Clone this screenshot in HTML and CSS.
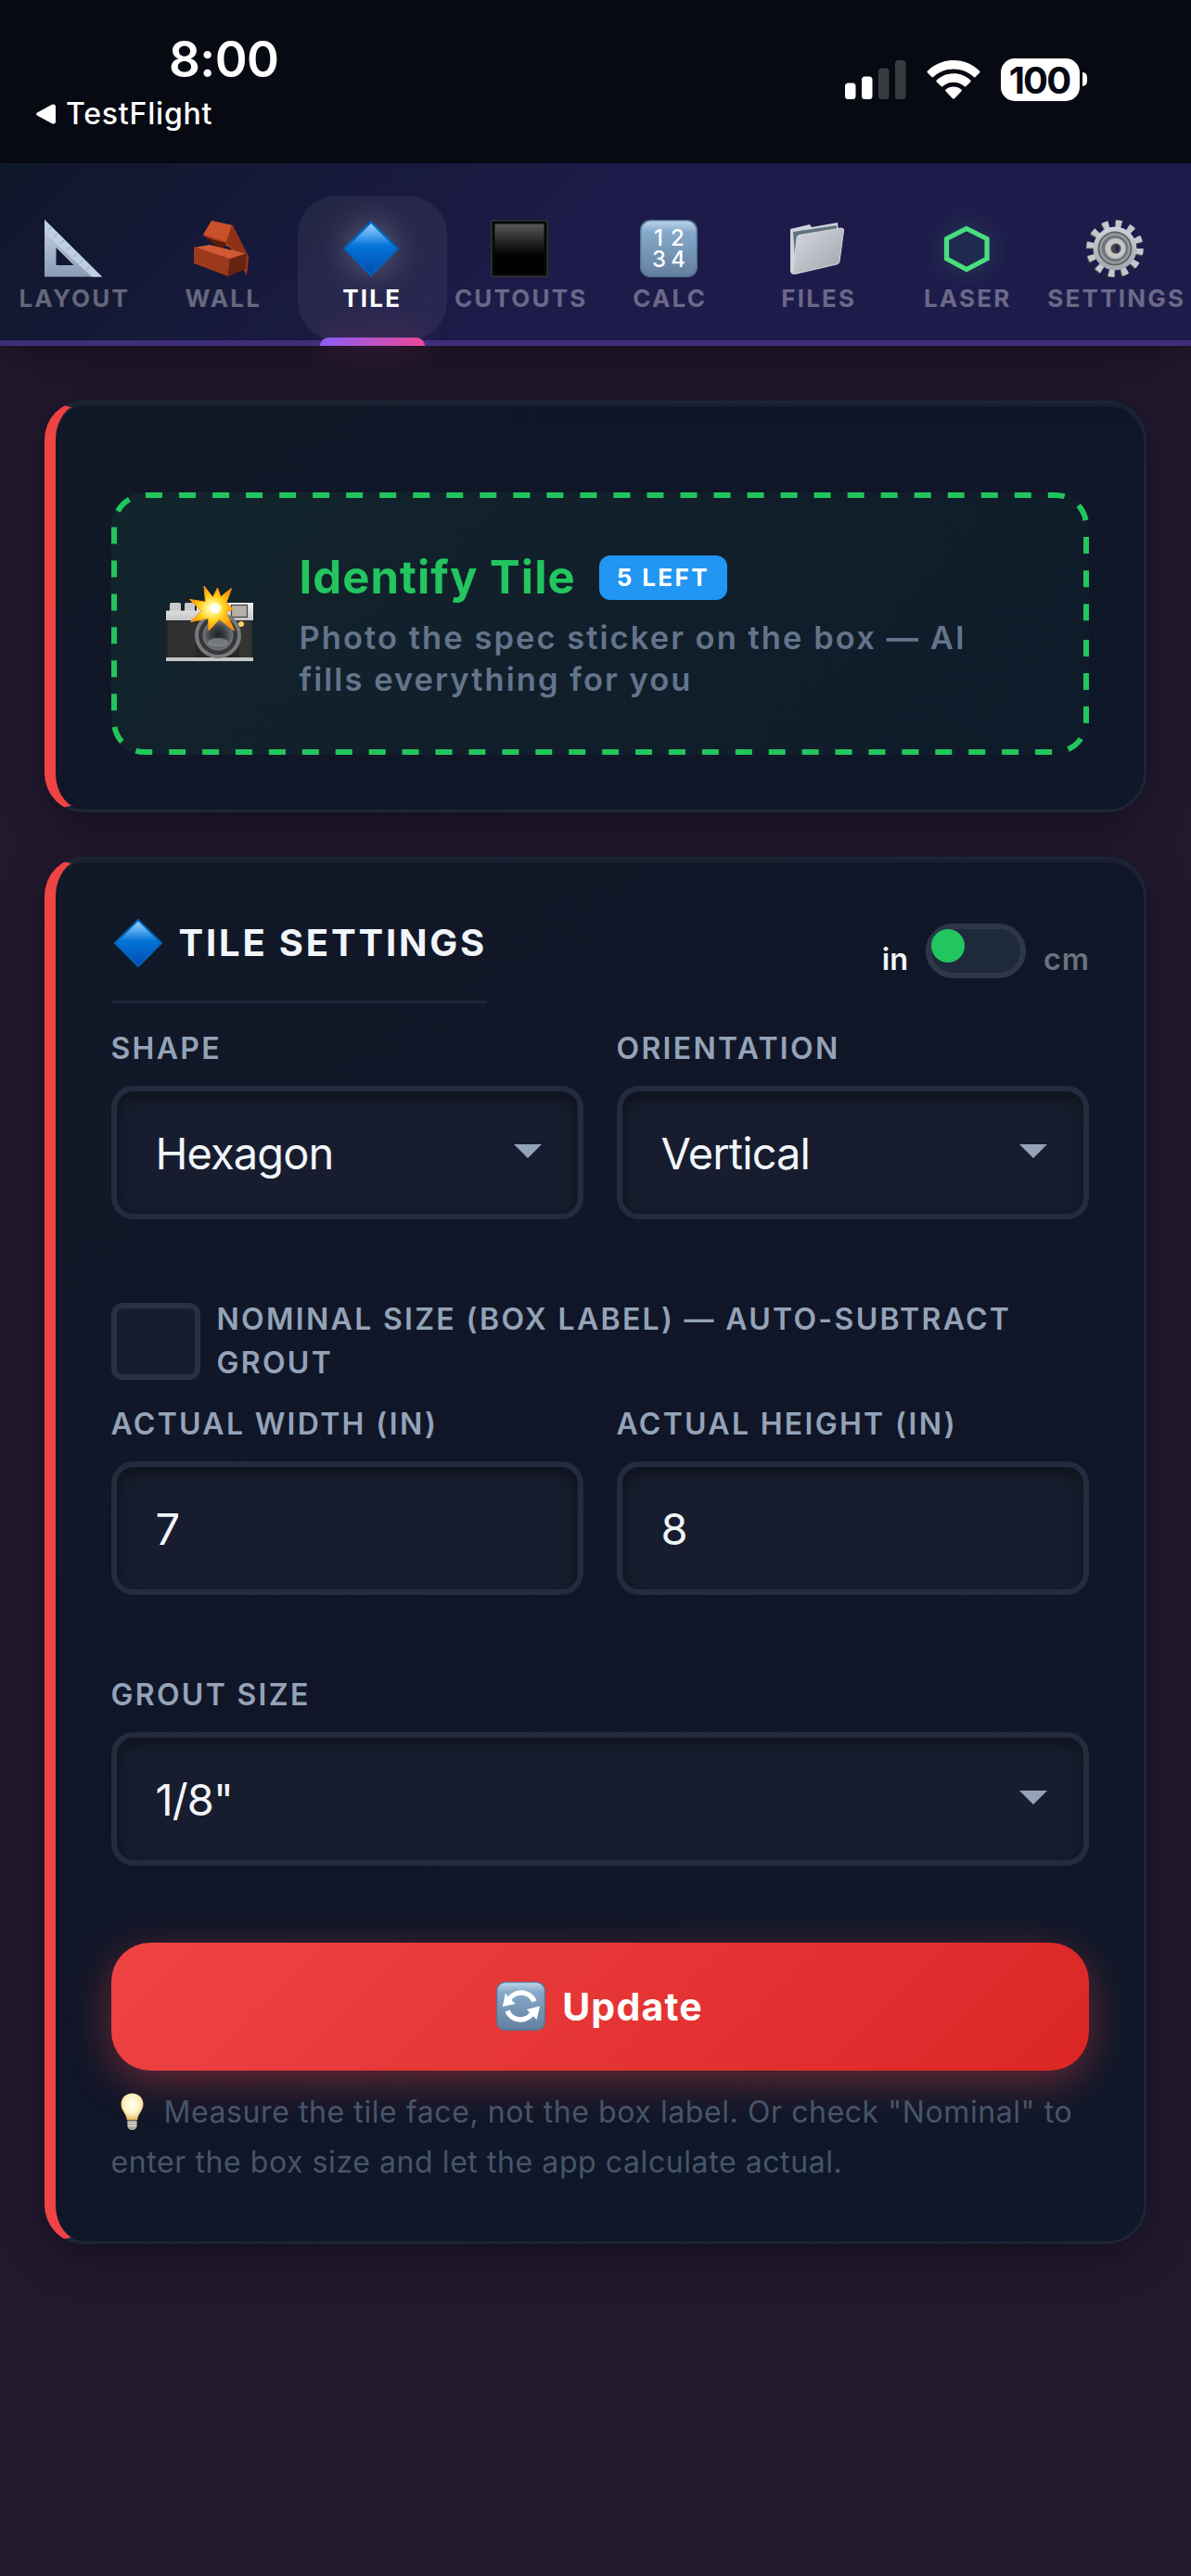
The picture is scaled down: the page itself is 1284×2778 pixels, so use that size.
FILE: index.html
```html
<!DOCTYPE html>
<html lang="en">
<head>
<meta charset="utf-8">
<title>Tile Settings</title>
<link rel="stylesheet" href="styles.css">
</head>
<body>
<header class="status">
  <div class="status-left">
    <div class="time"><span>8:00</span></div>
    <div class="back">
      <svg width="24" height="24" viewBox="0 0 24 24"><path d="M3.500 10.300 19 1.800Q23 0.500 23 4V20Q23 23.500 19 22.200L3.500 13.700Q0.500 12 3.500 10.300Z" fill="#fff"/></svg>
      <span>TestFlight</span>
    </div>
  </div>
  <div class="status-right">
    <svg class="signal" width="66" height="42" viewBox="0 0 66 42"><rect x="0" y="24.500" width="11.500" height="17.500" rx="3.500" fill="#fff"/><rect x="18" y="17.500" width="11.500" height="24.500" rx="3.500" fill="#fff"/><rect x="36" y="8.500" width="11.500" height="33.500" rx="3.500" fill="#393b41"/><rect x="54" y="0" width="11.500" height="42" rx="3.500" fill="#393b41"/></svg>
    <svg class="wifi" width="58" height="42" viewBox="0 0 58 42"><path d="M29 0C40 0 50 4.300 57 11.500Q58 12.500 57 13.500L52.500 18Q51.500 18.700 50.500 17.800C44.500 12.200 37 9.500 29 9.500S13.500 12.200 7.500 17.800Q6.500 18.700 5.500 18L1 13.500Q0 12.500 1 11.500C8 4.300 18 0 29 0Z" fill="#fff"/><path d="M29 14.300C36 14.300 42.500 17 47.200 21.400Q48.200 22.400 47.200 23.400L42.500 28Q41.500 28.800 40.500 27.900C37.400 25.200 33.300 23.700 29 23.700S20.600 25.200 17.500 27.900Q16.500 28.800 15.500 28L10.800 23.400Q9.800 22.400 10.800 21.400C15.500 17 22 14.300 29 14.300Z" fill="#fff"/><path d="M29 28.500C32.200 28.500 35.200 29.700 37.400 31.500Q38.400 32.500 37.400 33.500L30 41.200Q29 42 28 41.200L20.600 33.500Q19.600 32.500 20.600 31.500C22.800 29.700 25.800 28.500 29 28.500Z" fill="#fff"/></svg>
    <div class="battery"><span>100</span></div><i class="nub"></i>
  </div>
</header>

<nav class="tabs">
  <a class="tab"><svg class="ico" viewBox="0 0 62 62"><defs><linearGradient id="sq" x1="0" y1="0" x2="0" y2="1"><stop offset="0" stop-color="#c4d3e6"/><stop offset="1" stop-color="#8a9bb5"/></linearGradient></defs><path fill="url(#sq)" fill-rule="evenodd" d="M0 0 62 61.500H0ZM12.500 30V49H31.500Z"/><path d="M0 0 62 61.500H51L0 14Z" fill="#bfd0e2"/><path d="M7 8l-4 4M14 15l-4 4M21 22l-4 4M28 29l-4 4M35 36l-4 4M42 43l-4 4M49 50l-4 4" stroke="#a3b5ca" stroke-width="1.200"/></svg><span>LAYOUT</span></a>
  <a class="tab"><svg class="ico" viewBox="0 0 62 62"><path d="M20 1 43 6 60 40 58 60 40 30 11 17Z" fill="#a33a1c"/><path d="M20 1 42 6 36 24 11 16Z" fill="#c9502b"/><path d="M42 6 60 40 57 43 36 24Z" fill="#8f3018"/><path d="M13 19 36 25 31 32Z" fill="#5c1c0c"/><path d="M1 30 18 27 59 37 40 43Z" fill="#d05a33"/><path d="M1 29 40 42 38 61 1 47Z" fill="#9c381c"/><path d="M40 42 58 36 57 53 38 61Z" fill="#682410"/></svg><span>WALL</span></a>
  <a class="tab active"><svg class="ico glow" viewBox="0 0 62 62"><defs><linearGradient id="dm" x1="0" y1="0" x2="0" y2="1"><stop offset="0" stop-color="#8fd0ff"/><stop offset=".22" stop-color="#55a8ef"/><stop offset=".45" stop-color="#0474d8"/><stop offset="1" stop-color="#004db2"/></linearGradient></defs><path d="M31 .500 61.500 31 31 61.500.500 31Z" fill="#0262b8"/><path d="M31 4 58 31 31 58 4 31Z" fill="url(#dm)"/></svg><span>TILE</span></a>
  <a class="tab"><svg class="ico" viewBox="0 0 62 62"><defs><linearGradient id="bk" x1="0" y1="0" x2="0" y2="1"><stop offset="0" stop-color="#585858"/><stop offset=".55" stop-color="#0c0c0c"/><stop offset=".65" stop-color="#000"/></linearGradient></defs><rect width="62" height="62" rx="2.500" fill="#343434"/><rect x="1.500" y="1.500" width="59" height="59" rx="1.500" fill="#080808"/><rect x="4.500" y="4.500" width="53" height="53" fill="url(#bk)"/></svg><span>CUTOUTS</span></a>
  <a class="tab"><svg class="ico" viewBox="0 0 62 62"><defs><linearGradient id="ky" x1="0" y1="0" x2="0" y2="1"><stop offset="0" stop-color="#bcd3e8"/><stop offset=".2" stop-color="#86a9cb"/><stop offset="1" stop-color="#64809f"/></linearGradient></defs><rect width="62" height="62" rx="11" fill="#577794"/><rect x="1.500" y="1.500" width="59" height="58.500" rx="10" fill="url(#ky)"/><g fill="#fff" font-family="Inter, sans-serif" font-size="24" font-weight="500" letter-spacing="0" text-anchor="middle"><text x="20" y="28">1</text><text x="40.500" y="28">2</text><text x="20.500" y="51">3</text><text x="41" y="51">4</text></g></svg><span>CALC</span></a>
  <a class="tab"><svg class="ico" viewBox="0 0 62 62"><defs><linearGradient id="fo" x1="0" y1="0" x2="1" y2="1"><stop offset="0" stop-color="#d5d9df"/><stop offset="1" stop-color="#a0a4ac"/></linearGradient></defs><path d="M2 10 23 5 25 8 53 3 54 12 8 55 4 59 2 56Z" fill="#cdd4dc"/><path d="M5 13 25 10 52 6V40L8 54Z" fill="#60747f"/><path d="M9 20Q9 17 12 16.500L57 9Q60 9 59.500 12L55 45Q54.500 47.500 52 48L7 58.500Q4.500 59 5 56Z" fill="url(#fo)" stroke="#d5d8dc" stroke-width="1"/></svg><span>FILES</span></a>
  <a class="tab"><svg class="ico laser" viewBox="0 0 62 62"><path d="M31 9.500 53 20.500V42L31 53.500 9.500 42V20.500Z" fill="none" stroke="#4ade80" stroke-width="5.200"/></svg><span>LASER</span></a>
  <a class="tab"><svg class="ico" viewBox="0 0 62 62"><defs><linearGradient id="ge" x1="0" y1="0" x2="0" y2="1"><stop offset="0" stop-color="#ccd4dc"/><stop offset="1" stop-color="#a3a5aa"/></linearGradient></defs><circle cx="30" cy="32" r="26.500" fill="none" stroke="#5a5148" stroke-width="8" stroke-dasharray="6.400 7.475"/><circle cx="31" cy="31" r="26.500" fill="none" stroke="#c2c7cc" stroke-width="8.500" stroke-dasharray="6.400 7.475"/><circle cx="31" cy="31" r="23.500" fill="url(#ge)"/><circle cx="31" cy="31" r="18.500" fill="#5f6368"/><circle cx="31" cy="31" r="16.500" fill="#9da1a5"/><circle cx="31" cy="31" r="14.500" fill="#74787c"/><circle cx="31.500" cy="31" r="11" fill="#c3c7ca"/><circle cx="32" cy="31" r="5.500" fill="#4d4743"/><path d="M33 26q5 5 0 10q-3-5 0-10Z" fill="#26225a"/></svg><span>SETTINGS</span></a>
</nav>

<main>
  <section class="card identify-card">
    <div class="identify">
      <svg class="dashes" width="1054" height="283" viewBox="0 0 1054 283"><path d="M37 3H1018A33 33 0 0 1 1051 36V150" stroke-dasharray="18 18.030"/><path d="M1051 159V247A33 33 0 0 1 1018 280H36A33 33 0 0 1 3 247V36A33 33 0 0 1 36 3" stroke-dasharray="18 17.920"/></svg>
      <svg class="camera" width="96" height="96" viewBox="0 0 96 96"><defs><linearGradient id="cm" x1="0" y1="0" x2="0" y2="1"><stop offset="0" stop-color="#f2f2f2"/><stop offset="1" stop-color="#c4c4c6"/></linearGradient><radialGradient id="fl"><stop offset="0" stop-color="#fff"/><stop offset=".25" stop-color="#fff48a"/><stop offset=".55" stop-color="#ffd21e"/><stop offset="1" stop-color="#ff9406"/></radialGradient><radialGradient id="ln"><stop offset="0" stop-color="#222"/><stop offset=".5" stop-color="#3b3f42"/><stop offset="1" stop-color="#75797c"/></radialGradient></defs><rect x="5" y="26" width="12" height="12" rx="1.500" fill="#c9c9cb"/><rect x="21" y="26" width="11" height="12" rx="1.500" fill="#c9c9cb"/><path d="M1 34.500H34V26H95V46H1Z" fill="url(#cm)"/><rect x="1" y="45" width="94" height="41" fill="#262626"/><rect x="3" y="46" width="30" height="40" fill="#303030"/><rect x="80" y="46" width="13" height="39" fill="#343434"/><rect x="1" y="85" width="94" height="4" fill="#c6c6c8"/><rect x="71.500" y="28.500" width="17" height="13" fill="#b5afa8" stroke="#43413f" stroke-width="1.200"/><circle cx="82" cy="49" r="3" fill="#f4d35a"/><circle cx="57" cy="61" r="25" fill="#77797b"/><circle cx="57" cy="61" r="21" fill="#35373a"/><circle cx="57" cy="61" r="16.500" fill="url(#ln)"/><ellipse cx="57" cy="69" rx="11" ry="5" fill="#8e9092" opacity=".7"/><path d="M42 8 51.500 20 56.500 10 60 19.500 71.500 10.500 66 26 73.500 33 65.500 36 74.600 56 58.500 44 47 56 46.500 43 27.500 46.500 39 35 26.500 22.500 43.500 25Z" fill="url(#fl)" stroke="#ff9a10" stroke-width="1"/><circle cx="55" cy="32" r="5.500" fill="#fff" opacity=".85"/></svg>
      <div class="identify-text">
        <div class="identify-title"><span>Identify Tile</span><b class="badge"><span>5 LEFT</span></b></div>
        <p>Photo the spec sticker on the box — AI<br>fills everything for you</p>
      </div>
    </div>
  </section>

  <section class="card settings">
    <div class="head">
      <h2><svg width="54" height="54" viewBox="0 0 62 62"><path d="M31 .500 61.500 31 31 61.500.500 31Z" fill="#0262b8"/><path d="M31 4 58 31 31 58 4 31Z" fill="url(#dm)"/></svg><span>TILE SETTINGS</span></h2>
      <div class="units"><span>in</span><div class="toggle"><i></i></div><span class="off">cm</span></div>
    </div>
    <div class="row">
      <div class="field"><label>SHAPE</label><div class="box"><span>Hexagon</span><svg class="arrow" width="30" height="15" viewBox="0 0 30 15"><path d="M0 0H30L15 15Z" fill="#94a3b8"/></svg></div></div>
      <div class="field"><label>ORIENTATION</label><div class="box"><span>Vertical</span><svg class="arrow" width="30" height="15" viewBox="0 0 30 15"><path d="M0 0H30L15 15Z" fill="#94a3b8"/></svg></div></div>
    </div>
    <div class="nominal"><div class="check"></div><p>NOMINAL SIZE (BOX LABEL) — AUTO-SUBTRACT<br>GROUT</p></div>
    <div class="row sizes">
      <div class="field"><label>ACTUAL WIDTH (IN)</label><div class="box"><span>7</span></div></div>
      <div class="field"><label>ACTUAL HEIGHT (IN)</label><div class="box"><span>8</span></div></div>
    </div>
    <div class="row grout">
      <div class="field"><label>GROUT SIZE</label><div class="box"><span>1/8"</span><svg class="arrow" width="30" height="15" viewBox="0 0 30 15"><path d="M0 0H30L15 15Z" fill="#94a3b8"/></svg></div></div>
    </div>
    <button class="update"><svg width="53" height="53" viewBox="0 0 62 62"><rect width="62" height="62" rx="11" fill="#577794"/><rect x="1.500" y="1.500" width="59" height="58.500" rx="10" fill="url(#ky)"/><g fill="none" stroke="#fff" stroke-width="6.500"><path d="M14.500 26A18 18 0 0 1 48 25"/><path d="M47.500 36A18 18 0 0 1 14 37"/></g><path d="M8 31.500 11.500 15 24 28ZM55 31 51 48 38.500 35Z" fill="#fff"/></svg><span>Update</span></button>
    <p class="hint"><svg width="54" height="48" viewBox="0 0 54 48"><defs><radialGradient id="bu" cx=".5" cy=".4" r=".6"><stop offset="0" stop-color="#fffff6"/><stop offset=".6" stop-color="#fdf2c0"/><stop offset="1" stop-color="#e3b85c"/></radialGradient></defs><path d="M22.500 4.500C29.500 4.500 34.500 9.500 34.500 16C34.500 23 29 26 28 33.500H17C16 26 10.500 23 10.500 16C10.500 9.500 15.500 4.500 22.500 4.500Z" fill="url(#bu)"/><path d="M17.500 34H27.500V39Q27.500 44 22.500 44T17.500 39Z" fill="#aaa59c"/><path d="M17.500 36.500H27.500M17.500 39.500H27.500" stroke="#dedad2" stroke-width="1.300"/></svg><span>Measure the tile face, not the box label. Or check "Nominal" to</span><br><span>enter the box size and let the app calculate actual.</span></p>
  </section>
</main>
</body>
</html>
```
FILE: styles.css
```css
* { box-sizing: border-box; }
body {
  margin: 0;
  width: 1284px;
  min-height: 2778px;
  background: #22192f;
  font-family: Inter, "Liberation Sans", sans-serif;
  color: #f1f5f9;
}
svg { display: block; flex: none; }
p, h2 { margin: 0; }

.status {
  position: relative;
  z-index: 2;
  display: flex;
  justify-content: space-between;
  height: 176px;
  background: #070a12;
  color: #fff;
}
.status-left { padding: 34px 0 0 37px; }
.time { padding-left: 145px; font-size: 53px; font-weight: 600; line-height: 60px; letter-spacing: -.6px; }
.back { display: flex; align-items: center; gap: 10px; margin-top: 9px; font-size: 32px; font-weight: 500; line-height: 40px; letter-spacing: .8px; }
.status-right { display: flex; align-items: flex-start; padding: 63px 112px 0 0; }
.signal { margin: 2px 22px 0 0; }
.wifi { margin: 2px 22px 0 0; }
.battery {
  display: flex;
  align-items: center;
  justify-content: center;
  width: 85px;
  height: 46px;
  padding-right: 2px;
  border-radius: 15px;
  background: #fff;
  color: #060912;
  font-size: 40px;
  font-weight: 700;
  letter-spacing: -1.9px;
}
.nub { width: 5px; height: 15px; margin: 15px 0 0 3px; border-radius: 0 6px 6px 0; background: #fff; }

.tabs {
  position: relative;
  z-index: 1;
  display: flex;
  height: 197px;
  padding-top: 35px;
  border-bottom: 6px solid #3e2e78;
  background: linear-gradient(135deg, #0f172a 0%, #1e1b4b 50%, #1e1b4b 100%);
  box-shadow: 0 12px 60px rgba(0, 0, 0, .4);
}
.tab {
  position: relative;
  display: flex;
  flex: 0 0 160.5px;
  flex-direction: column;
  align-items: center;
  gap: 8px;
  padding-top: 27px;
  color: rgba(255, 255, 255, .35);
  font-size: 26px;
  font-weight: 700;
  line-height: 32px;
  letter-spacing: 2.2px;
  white-space: nowrap;
}
.ico { width: 62px; height: 62px; margin: -1px 3px -1px 0; }
.active { border-radius: 42px; background: rgba(255, 255, 255, .06); color: #fff; }
.active::after {
  content: "";
  position: absolute;
  bottom: -6px;
  left: 24px;
  width: 113px;
  height: 9px;
  border-radius: 9px 9px 0 0;
  background: linear-gradient(90deg, #8b5cf6, #ec4899);
  box-shadow: 0 0 36px rgba(236, 72, 153, .4);
}
.glow { filter: drop-shadow(0 0 18px rgba(255, 255, 255, .3)); }
.laser { filter: drop-shadow(0 0 12px rgba(74, 222, 128, .4)); }

main { padding: 59px 48px 0; }
.card {
  padding: 60px 59.5px;
  border: 3px solid #1c2536;
  border-left: 12px solid #ef4444;
  border-radius: 42px;
  background: linear-gradient(145deg, #111827, #101628 50%, #0e1829);
  box-shadow: 0 12px 48px rgba(0, 0, 0, .4), inset 0 3px 0 rgba(255, 255, 255, .04);
}
.identify-card { height: 444px; padding-top: 96px; }
.identify {
  position: relative;
  display: flex;
  align-items: center;
  height: 283px;
  padding-left: 58px;
  border-radius: 36px;
  background: linear-gradient(135deg, rgba(34, 197, 94, .08), rgba(34, 197, 94, .02));
}
.dashes { position: absolute; inset: 0; fill: none; stroke: #22c55e; stroke-width: 6; }
.camera { margin: -2px 49px 0 0; }
.identify-text { padding-top: 3px; }
.identify-title { display: flex; align-items: center; height: 60px; font-size: 49px; font-weight: 700; letter-spacing: 1.05px; color: #22c55e; }
.badge {
  display: flex;
  align-items: center;
  justify-content: center;
  width: 138px;
  height: 48px;
  margin-left: 25px;
  border-radius: 12px;
  background: #2196f3;
  color: #fff;
  font-size: 26px;
  font-weight: 700;
  letter-spacing: 2.4px;
}
.identify-text p { margin-top: 13px; color: #64748b; font-size: 34.5px; font-weight: 600; line-height: 44.7px; letter-spacing: 2.05px; white-space: nowrap; }

.settings { margin-top: 48px; height: 1496px; }
.head { display: flex; justify-content: space-between; height: 95px; }
h2 {
  display: flex;
  align-items: center;
  gap: 17px;
  padding: 0 0 33px 2px;
  border-bottom: 3px solid #1e2637;
  font-size: 40px;
  font-weight: 700;
  line-height: 59px;
  letter-spacing: 2.8px;
}
.units { display: flex; align-items: center; gap: 19px; height: 59px; margin-top: 9px; font-size: 32.5px; font-weight: 600; }
.units span { padding-top: 17px; }
.off { color: #6b7280; }
.units .off { margin-right: -1px; letter-spacing: .6px; }
.toggle { width: 108px; height: 59px; border: 6px solid #2d3748; border-radius: 30px; background: #1e293b; }
.toggle i { display: block; width: 36px; height: 36px; border-radius: 50%; background: #22c55e; }
.row { display: flex; gap: 36px; margin-top: 28px; }
.field { flex: 1; }
label { display: block; padding-top: 2px; color: #94a3b8; font-size: 32px; font-weight: 600; line-height: 38px; letter-spacing: 2.3px; }
.box {
  display: flex;
  align-items: center;
  justify-content: space-between;
  height: 144px;
  margin-top: 21px;
  padding: 1px 39px 0 42px;
  border: 6px solid #232c3e;
  border-radius: 24px;
  background: #171d2e;
  box-shadow: inset 0 6px 18px rgba(0, 0, 0, .4);
  color: #f1f5f9;
  font-size: 47px;
  letter-spacing: -.9px;
}
.arrow { margin-top: -4px; }
.nominal { display: flex; align-items: center; gap: 18px; margin-top: 83.5px; color: #94a3b8; font-size: 32px; font-weight: 600; line-height: 47.7px; letter-spacing: 2.3px; white-space: nowrap; }
.check { flex: none; width: 96px; height: 83px; border: 6px solid #283142; border-radius: 12px; background: #171d2e; }
.sizes { margin-top: 21px; }
.grout { margin-top: 87px; }
.update {
  display: flex;
  align-items: center;
  justify-content: center;
  gap: 18px;
  width: 100%;
  height: 138px;
  margin-top: 83px;
  padding: 0;
  border: 0;
  border-radius: 42px;
  background: linear-gradient(135deg, #ef4444, #dc2626);
  box-shadow: 0 12px 45px rgba(239, 68, 68, .4);
  color: #fff;
  font: 700 41px Inter, sans-serif;
  letter-spacing: 1.2px;
}
.hint { margin-top: 18px; color: #475569; font-size: 32px; line-height: 54px; letter-spacing: .58px; white-space: nowrap; }
.hint svg { display: inline-block; margin-right: 3px; vertical-align: -12px; }
```
